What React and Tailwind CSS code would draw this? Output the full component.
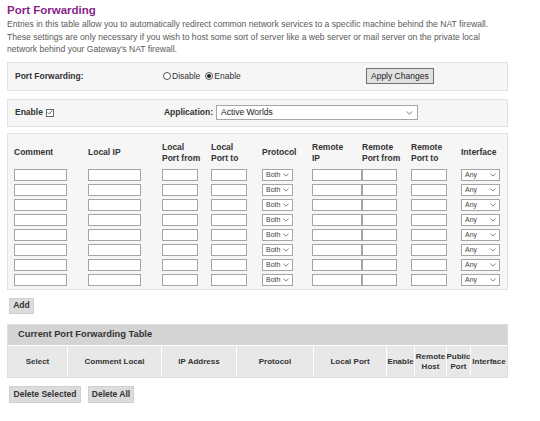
const font = { fontFamily: '"Liberation Sans", Arial, sans-serif' };

const COLS = [
  { label: ['Comment'], w: 'w-[74px]' },
  { label: ['Local IP'], w: 'w-[74px]' },
  { label: ['Local', 'Port from'], w: 'w-[49px]' },
  { label: ['Local', 'Port to'], w: 'w-[51px]' },
  { label: ['Protocol'], w: 'w-[50px]' },
  { label: ['Remote', 'IP'], w: 'w-[50px]' },
  { label: ['Remote', 'Port from'], w: 'w-[49px]' },
  { label: ['Remote', 'Port to'], w: 'w-[50px]' },
  { label: ['Interface'], w: 'w-[42px]' },
];

const CURRENT_COLS = [
  { label: ['Select'], w: 'w-[60px]' },
  { label: ['Comment Local'], w: 'w-[94px]' },
  { label: ['IP Address'], w: 'w-[75px]' },
  { label: ['Protocol'], w: 'w-[77px]' },
  { label: ['Local Port'], w: 'w-[73px]' },
  { label: ['Enable'], w: 'w-[28px]' },
  { label: ['Remote', 'Host'], w: 'w-[32px]' },
  { label: ['Public', 'Port'], w: 'w-[24px]' },
  { label: ['Interface'], w: 'w-[36px]' },
];

const FILAS = [0, 1, 2, 3, 4, 5, 6, 7];

function Chevron({ className }) {
  return (
    <svg viewBox="0 0 8 5" className={className} fill="none" stroke="#555" strokeWidth="1">
      <path d="M0.5 0.5 L4 4 L7.5 0.5" />
    </svg>
  );
}

function Campo({ w }) {
  return <input className={`block ${w} h-[12px] border border-[#a5a5a5] bg-white`} />;
}

function MiniSelect({ w, valor }) {
  return (
    <div className={`${w} h-[12px] border border-[#a5a5a5] bg-white flex items-center justify-between pl-[3px] pr-[3px]`}>
      <span className="text-[7px] text-[#444] leading-none">{valor}</span>
      <Chevron className="w-[6px] h-[4px]" />
    </div>
  );
}

function Radio({ checked }) {
  return (
    <span className="w-[8px] h-[8px] rounded-full border border-[#555] bg-white flex items-center justify-center">
      {checked && <span className="w-[4px] h-[4px] rounded-full bg-[#222]" />}
    </span>
  );
}

export default function App() {
  return (
    <div className="w-[540px] h-[421px] bg-white px-[7px] pt-[3px] overflow-hidden" style={font}>
      {/* Titulo */}
      <h1 className="text-[11.5px] font-bold text-[#8a1f8a] leading-[14px]">Port Forwarding</h1>
      <p className="text-[8.6px] text-[#5a5a5a] leading-[12.5px] whitespace-nowrap mt-[1px]">
        Entries in this table allow you to automatically redirect common network services to a specific machine behind the NAT firewall.<br />
        These settings are only necessary if you wish to host some sort of server like a web server or mail server on the private local<br />
        network behind your Gateway's NAT firewall.
      </p>

      {/* Port Forwarding on/off */}
      <div className="mt-[6px] w-[501px] h-[29px] border border-[#e2e2e2] bg-[#f6f6f6] flex items-center pl-[7px]">
        <span className="w-[148px] text-[8.5px] font-bold text-[#333]">Port Forwarding:</span>
        <label className="flex items-center text-[8.5px] text-[#333]">
          <Radio />
          <span className="ml-[1px]">Disable</span>
        </label>
        <label className="flex items-center text-[8.5px] text-[#333] ml-[5px]">
          <Radio checked />
          <span className="ml-[1px]">Enable</span>
        </label>
        <button className="ml-[125px] w-[68px] h-[16px] border border-[#707070] bg-[#e1e1e1] text-[8.5px] text-[#222]">
          Apply Changes
        </button>
      </div>

      {/* Aplicacion */}
      <div className="mt-[8px] w-[501px] h-[28px] border border-[#e2e2e2] bg-[#f6f6f6] flex items-center pl-[7px]">
        <span className="text-[8.5px] font-bold text-[#333]">Enable</span>
        <span className="ml-[3px] w-[8px] h-[8px] border border-[#666] bg-white flex items-center justify-center">
          <svg viewBox="0 0 8 8" className="w-[7px] h-[7px]" fill="none" stroke="#333" strokeWidth="1">
            <path d="M1 4 L3 6 L7 1.5" />
          </svg>
        </span>
        <span className="ml-[110px] text-[8.5px] font-bold text-[#333]">Application:</span>
        <div className="ml-[3px] w-[202px] h-[15px] border border-[#a5a5a5] bg-white flex items-center justify-between px-[4px]">
          <span className="text-[8.5px] text-[#222]">Active Worlds</span>
          <Chevron className="w-[7px] h-[4px]" />
        </div>
      </div>

      {/* Tabla de reglas */}
      <div className="mt-[6px] w-[501px] h-[157px] border border-[#e2e2e2] bg-[#f6f6f6] pl-[6px] pt-[7px]">
        <div className="flex h-[24px] items-center">
          {COLS.map((c, i) => (
            <div key={i} className={`${c.w} text-[8.5px] font-bold text-[#333] leading-[11px]`}>
              {c.label.map(l => <div key={l}>{l}</div>)}
            </div>
          ))}
        </div>
        <div className="mt-[4px]">
          {FILAS.map(f => (
            <div key={f} className="flex h-[15px]">
              <div className="w-[74px]"><Campo w="w-[53px]" /></div>
              <div className="w-[74px]"><Campo w="w-[53px]" /></div>
              <div className="w-[49px]"><Campo w="w-[36px]" /></div>
              <div className="w-[51px]"><Campo w="w-[36px]" /></div>
              <div className="w-[50px]"><MiniSelect w="w-[31px]" valor="Both" /></div>
              <div className="w-[50px]"><Campo w="w-[50px]" /></div>
              <div className="w-[49px]"><Campo w="w-[35px]" /></div>
              <div className="w-[50px]"><Campo w="w-[36px]" /></div>
              <div className="w-[42px]"><MiniSelect w="w-[39px]" valor="Any" /></div>
            </div>
          ))}
        </div>
      </div>

      <button className="mt-[8px] ml-[2px] w-[25px] h-[16px] bg-[#dcdcdc] border border-[#d0d0d0] text-[8.5px] font-bold text-[#333]">
        Add
      </button>

      {/* Tabla actual */}
      <div className="mt-[9px] w-[501px] border border-[#dedede]">
        <div className="h-[20px] bg-[#d4d4d4] flex items-center pl-[10px]">
          <span className="text-[9.3px] font-bold text-[#333]">Current Port Forwarding Table</span>
        </div>
        <div className="flex h-[32px] border-t border-white">
          {CURRENT_COLS.map((c, i) => (
            <div key={i}
                 className={`${c.w} h-full bg-[#e8e8e8] border-r border-white last:border-r-0 flex flex-col items-center justify-center text-[8px] font-bold text-[#333] leading-[10px] text-center`}>
              {c.label.map(l => <div key={l} className="whitespace-nowrap">{l}</div>)}
            </div>
          ))}
        </div>
      </div>

      <div className="mt-[8px] ml-[2px] flex gap-[7px]">
        <button className="w-[72px] h-[17px] bg-[#dcdcdc] border border-[#d0d0d0] text-[8.5px] font-bold text-[#333]">
          Delete Selected
        </button>
        <button className="w-[46px] h-[17px] bg-[#dcdcdc] border border-[#d0d0d0] text-[8.5px] font-bold text-[#333]">
          Delete All
        </button>
      </div>
    </div>
  );
}
